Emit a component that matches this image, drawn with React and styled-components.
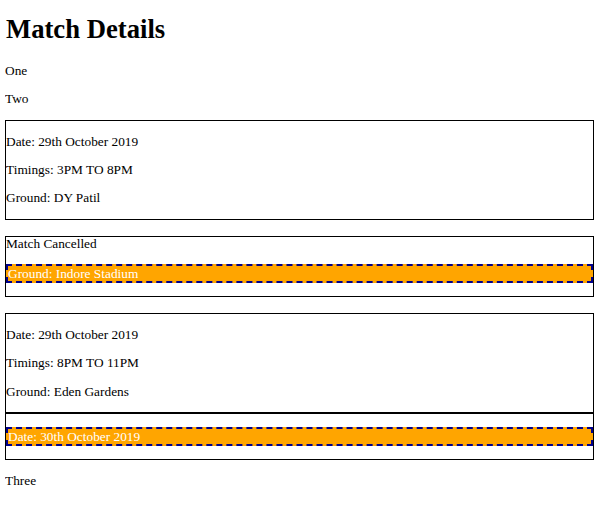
import React from "react";
import styled, { createGlobalStyle } from "styled-components";

const GlobalStyle = createGlobalStyle`
  body {
    margin: 0 6px 8px 5px;
    font-family: "Liberation Serif", "Times New Roman", serif;
    font-size: 13.33px;
    line-height: 15.33px;
    color: #000;
    background: #fff;
  }
`;

const Title = styled.h1`
  font-size: 26.66px;
  line-height: 31px;
  font-weight: bold;
  margin: 14px 0 18px;
  padding-left: 1px;
`;

const Line = styled.p`
  margin: 13px 0;
`;

const Card = styled.div`
  border: 1px solid #000;
  margin-bottom: ${(p) => p.$gap || 0}px;
`;

const Note = styled.div`
  margin: 0;
  line-height: 14px;
`;

const Highlight = styled.p`
  margin: 13px 0;
  background: orange;
  color: #fff;
  border: 2px dashed darkblue;
`;

const matches = [
  {
    date: "29th October 2019",
    timings: "3PM TO 8PM",
    ground: "DY Patil",
  },
  {
    date: "29th October 2019",
    timings: "8PM TO 11PM",
    ground: "Eden Gardens",
  },
];

const MatchCard = ({ match, gap }) => (
  <Card $gap={gap}>
    <Line>Date: {match.date}</Line>
    <Line>Timings: {match.timings}</Line>
    <Line>Ground: {match.ground}</Line>
  </Card>
);

const App = () => {
  return (
    <>
      <GlobalStyle />
      <Title>Match Details</Title>
      <Line>One</Line>
      <Line>Two</Line>
      <MatchCard match={matches[0]} gap={16} />
      <Card $gap={16}>
        <Note>Match Cancelled</Note>
        <Highlight>Ground: Indore Stadium</Highlight>
      </Card>
      <MatchCard match={matches[1]} />
      <Card>
        <Highlight>Date: 30th October 2019</Highlight>
      </Card>
      <Line>Three</Line>
    </>
  );
};

export default App;
